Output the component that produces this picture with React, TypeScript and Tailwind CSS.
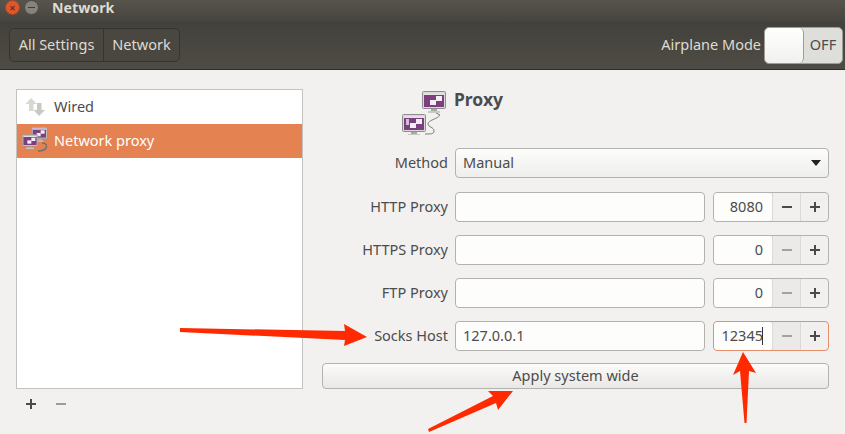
const font = { fontFamily: '"Noto Sans", sans-serif' };

function Monitor({ x, y, dots = false }: { x: number; y: number; dots?: boolean }) {
  return (
    <g transform={`translate(${x} ${y})`}>
      <rect x="0.5" y="0.5" width="23" height="17" rx="1" fill="#d8d8d6" stroke="#8f8f8c" />
      <rect x="2" y="2" width="20" height="14" fill="#7c3f80" />
      <rect x="2" y="2" width="20" height="2" fill="#e7dfe8" />
      <rect x="14" y="5" width="6" height="5" fill="#f3eef4" />
      <rect x="8" y="9" width="6" height="5" fill="#f3eef4" />
      {dots && <rect x="4" y="5" width="3" height="6" fill="#cfc0d2" />}
      <rect x="9" y="18" width="6" height="2" fill="#a8a8a6" />
      <rect x="6" y="20" width="12" height="2" fill="#c8c8c6" />
    </g>
  );
}

function ProxyIcon() {
  return (
    <svg width="46" height="46" viewBox="0 0 46 46" className="block">
      <path d="M35 24 L39 26 C37 30 27 31 27 35 C27 38 33 38 33 42 C33 45 30 45 24 45" fill="none" stroke="#7b7b78" strokeWidth="1" />
      <Monitor x={21} y={2} />
      <Monitor x={1} y={25} dots />
    </svg>
  );
}

function SmallProxyIcon() {
  return (
    <svg width="26" height="28" viewBox="0 0 39 42" className="block">
      <path d="M30 24 C40 24 40 36 24 36" fill="none" stroke="#6f6f6c" strokeWidth="2" />
      <Monitor x={14} y={0} />
      <Monitor x={0} y={11} />
    </svg>
  );
}

function WiredIcon() {
  return (
    <svg width="20" height="18" viewBox="0 0 20 18" className="block">
      <path d="M6 0 L12 6 H8.5 V13 H4 V6 H0.5 Z" fill="#d8d8d3" />
      <path d="M14 18 L20 12 H16.5 V5 H12 V12 H8.5 Z" fill="#c9c9c4" />
    </svg>
  );
}

function Spin({ value, focused, minusOff }: { value: string; focused?: boolean; minusOff?: boolean }) {
  return (
    <div className={`flex h-[30px] w-[116px] rounded-[4px] border bg-[#f1f0ee] ${focused ? "border-[#e68f6c]" : "border-[#b3b2ae]"}`}>
      <div className="flex h-full w-[58px] items-center justify-end rounded-[4px] bg-[#fdfdfc] pr-[9px] text-[14.5px] text-[#4c4c4c]">
        {value}
        {focused && <span className="ml-[-1px] h-[18px] w-px bg-[#333]" />}
      </div>
      <div className={`flex w-[29px] items-center justify-center border-x border-[#dbdad7] ${minusOff ? "bg-[#ebeae8]" : ""}`}>
        <span className={`h-[2px] w-[10px] ${minusOff ? "bg-[#a3a29f]" : "bg-[#4a4a4a]"}`} />
      </div>
      <div className="relative flex flex-1 items-center justify-center">
        <span className="h-[2px] w-[10px] bg-[#4a4a4a]" />
        <span className="absolute h-[10px] w-[2px] bg-[#4a4a4a]" />
      </div>
    </div>
  );
}

function Row({ label, host = "", port, focused, minusOff }: { label: string; host?: string; port: string; focused?: boolean; minusOff?: boolean }) {
  return (
    <div className="flex h-[30px] items-center">
      <div className="w-[126px] text-right text-[14.5px] text-[#4c4c4c]">{label}</div>
      <div className="ml-[7px] mr-[8px] flex h-[30px] w-[250px] items-center rounded-[4px] border border-[#b3b2ae] bg-[#fdfdfc] pl-[7px] text-[14.5px] text-[#4c4c4c]">
        {host}
      </div>
      <Spin value={port} focused={focused} minusOff={minusOff} />
    </div>
  );
}

export default function App() {
  return (
    <div style={font} className="relative flex h-[434px] w-[845px] flex-col overflow-hidden bg-[#f2f1f0]">
      <div className="flex h-[22px] items-start bg-gradient-to-b from-[#57544c] to-[#46443e]">
        <div className="ml-[5px] flex h-[15px] w-[15px] items-center justify-center rounded-full border border-[#9a4a2c] bg-[#e2562b] text-[11px] leading-none text-[#4a2418]">×</div>
        <div className="ml-[4px] flex h-[15px] w-[15px] items-center justify-center rounded-full border border-[#4b4943] bg-[#85837c]">
          <span className="h-px w-[7px] bg-[#3e3d38]" />
        </div>
        <span className="ml-[13px] text-[14.2px] leading-[16px] font-bold text-[#dfdbd2]">Network</span>
      </div>
      <div className="flex h-[48px] items-center border-b border-[#2f2e2a] bg-gradient-to-b from-[#43413b] to-[#4e4c45] pb-[1px] pl-[9px] pr-[2px]">
        <div className="flex h-[34px] rounded-[5px] border border-[#35342f] bg-[#494740] text-[14.5px] text-[#dfdbd2]">
          <div className="flex w-[94px] items-center justify-center border-r border-[#35342f]">All Settings</div>
          <div className="flex w-[75px] items-center justify-center">Network</div>
        </div>
        <span className="ml-auto mr-[3px] text-[14.5px] text-[#dfdbd2]">Airplane Mode</span>
        <div className="flex h-[37px] w-[79px] rounded-[5px] border border-[#9d9c97] bg-[#dededb]">
          <div className="h-full w-[39px] rounded-[5px] border-r border-[#9d9c97] bg-gradient-to-b from-[#ffffff] to-[#f1f1ef]" />
          <div className="flex flex-1 items-center justify-center text-[14.5px] text-[#4c4c4c]">OFF</div>
        </div>
      </div>
      <div className="flex flex-1 pl-[16px] pr-[16px] pt-[19px]">
        <div className="flex w-[287px] flex-col">
          <div className="h-[300px] border border-[#c3c2be] bg-white">
            <div className="flex h-[34px] items-center pl-[8px] text-[14.5px] text-[#4c4c4c]">
              <WiredIcon />
              <span className="ml-[9px]">Wired</span>
            </div>
            <div className="flex h-[34px] items-center bg-[#e48252] pl-[5px] text-[14.5px] text-white">
              <SmallProxyIcon />
              <span className="ml-[6px]">Network proxy</span>
            </div>
          </div>
          <div className="mt-[10px] flex items-center pl-[10px]">
            <span className="relative flex h-[10px] w-[10px] items-center justify-center">
              <span className="h-[2px] w-[10px] bg-[#4a4a4a]" />
              <span className="absolute h-[10px] w-[2px] bg-[#4a4a4a]" />
            </span>
            <span className="ml-[20px] h-[2px] w-[10px] bg-[#9c9b98]" />
          </div>
        </div>
        <div className="ml-[19px] flex w-[507px] flex-col">
          <div className="flex h-[46px] pl-[79px]">
            <ProxyIcon />
            <span className="ml-[7px] text-[17.5px] leading-[21px] font-bold text-[#4c4c4c]">Proxy</span>
          </div>
          <div className="mt-[13px] flex h-[30px] items-center">
            <div className="w-[126px] text-right text-[14.5px] text-[#4c4c4c]">Method</div>
            <div className="ml-[7px] flex h-[30px] flex-1 items-center justify-between rounded-[4px] border border-[#b3b2ae] bg-gradient-to-b from-[#fdfdfc] to-[#eeeeec] pl-[7px] pr-[7px] text-[14.5px] text-[#4c4c4c]">
              Manual
              <span className="h-0 w-0 border-x-[5px] border-t-[6px] border-x-transparent border-t-[#222]" />
            </div>
          </div>
          <div className="mt-[14px] flex flex-col gap-[13px]">
            <Row label="HTTP Proxy" port="8080" />
            <Row label="HTTPS Proxy" port="0" minusOff />
            <Row label="FTP Proxy" port="0" minusOff />
            <Row label="Socks Host" host="127.0.0.1" port="12345" focused minusOff />
          </div>
          <div className="mt-[12px] flex h-[26px] items-center justify-center rounded-[4px] border border-[#b3b2ae] bg-gradient-to-b from-[#fbfbfa] to-[#e9e8e6] text-[14.5px] text-[#4c4c4c]">
            Apply system wide
          </div>
        </div>
      </div>
      <svg width="845" height="434" viewBox="0 0 845 434" className="pointer-events-none absolute left-0 top-0">
        <path d="M180 328 L345 331 L344 324 L367 337 L344 346 L345 340 L180 332 Z" fill="#ff2a00" />
        <path d="M743 352 L756 373 L749 371 L746.5 423 L744.5 423 L740 371 L733 375 Z" fill="#ff2a00" />
        <path d="M428 429 L493 396 L488 391 L513 391 L498 410 L496 403 L429 432 Z" fill="#ff2a00" />
      </svg>
    </div>
  );
}
